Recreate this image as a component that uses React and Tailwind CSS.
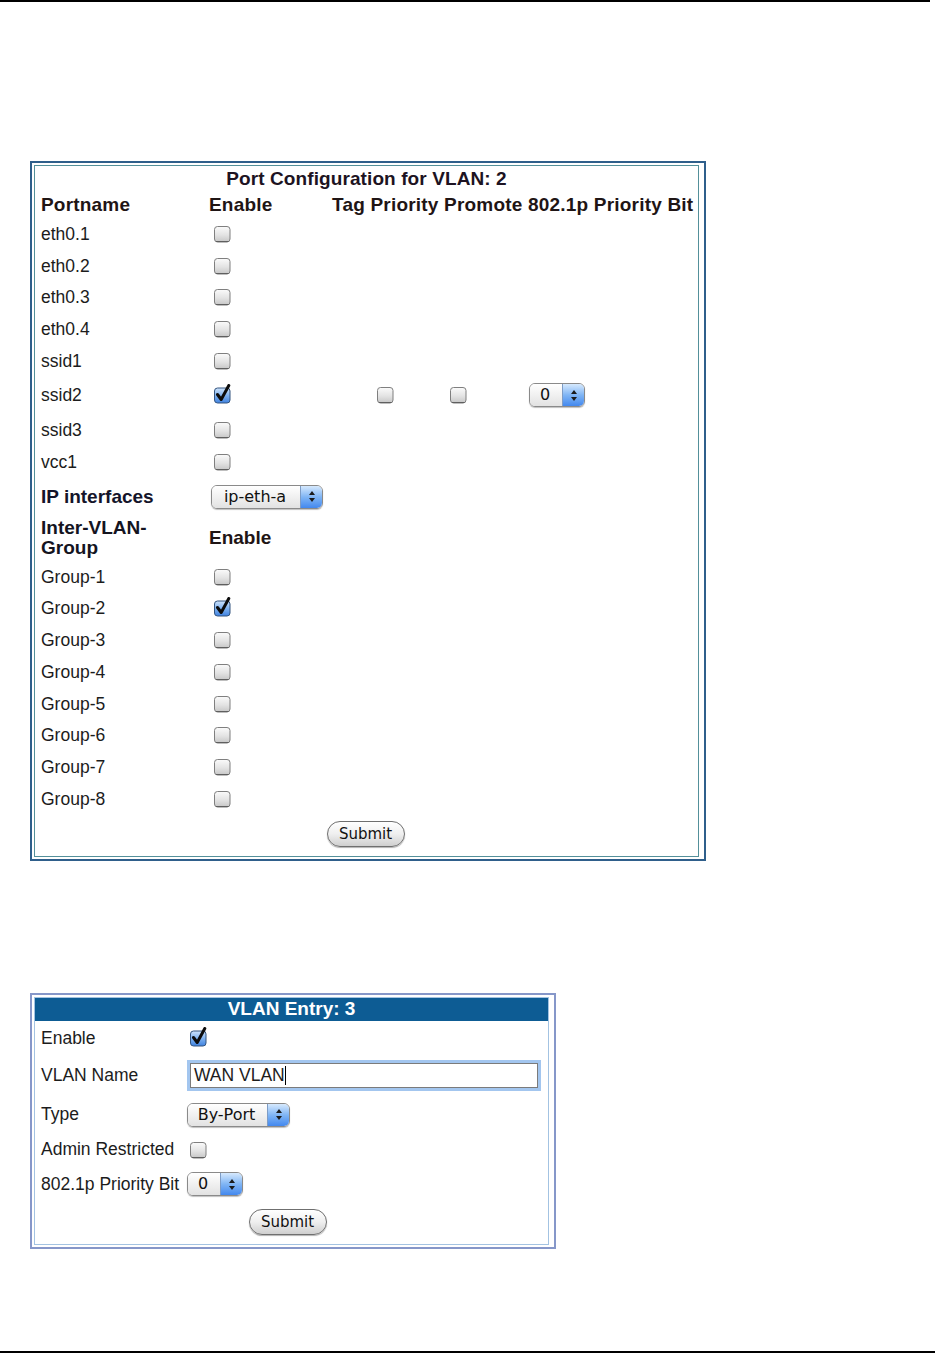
import React from "react";

/* Aqua-style form bits */
function Check({ checked = false }) {
  if (checked) {
    return (
      <svg width="18" height="20" viewBox="0 0 18 20" className="block">
        <defs>
          <linearGradient id="cbOn" x1="0" y1="0" x2="0" y2="1">
            <stop offset="0" stopColor="#cfe4fc" />
            <stop offset="0.5" stopColor="#7fb2f0" />
            <stop offset="1" stopColor="#3f82e0" />
          </linearGradient>
        </defs>
        <rect x="1.5" y="4" width="15.5" height="15" rx="3" fill="url(#cbOn)" stroke="#34557f" />
        <path d="M4.5 10.5 L8.2 15.5 L15.8 1.5" fill="none" stroke="#0c0c0c" strokeWidth="3" strokeLinecap="round" strokeLinejoin="round" />
      </svg>
    );
  }
  return (
    <svg width="18" height="18" viewBox="0 0 18 18" className="block">
      <defs>
        <linearGradient id="cbOff" x1="0" y1="0" x2="0" y2="1">
          <stop offset="0" stopColor="#fbfbfb" />
          <stop offset="0.55" stopColor="#e3e3e3" />
          <stop offset="1" stopColor="#c6c6c6" />
        </linearGradient>
      </defs>
      <rect x="1.5" y="1.5" width="15.5" height="15.5" rx="3" fill="url(#cbOff)" stroke="#7f7f7f" />
      <path d="M3 16.5 H15.5" stroke="#5f5f5f" strokeWidth="1" />
    </svg>
  );
}

function Arrows() {
  return (
    <svg width="8" height="13" viewBox="0 0 8 13">
      <path d="M4 1 L7 5 H1 Z" fill="#1b1b1b" />
      <path d="M4 12 L7 8 H1 Z" fill="#1b1b1b" />
    </svg>
  );
}

function Select({ value, width }) {
  return (
    <div
      className="flex h-[24px] rounded-[6px] border border-[#8a8a8a] overflow-hidden shadow-[0_1px_1px_rgba(0,0,0,0.25)]"
      style={{ width }}
    >
      <div className="flex-1 flex items-center justify-center bg-linear-to-b from-white to-[#e2e2e2] text-[16px] text-[#111] font-['DejaVu_Sans',Verdana,sans-serif] pr-[2px]">
        {value}
      </div>
      <div className="w-[22px] flex items-center justify-center bg-linear-to-b from-[#d6e9fd] via-[#80b5f4] to-[#4388ee] border-l border-[#7d9cc6]">
        <Arrows />
      </div>
    </div>
  );
}

function SubmitButton() {
  return (
    <div className="h-[26px] w-[78px] rounded-full border border-[#6f6f6f] bg-linear-to-b from-white via-[#efefef] to-[#cfcfcf] shadow-[0_1px_1px_rgba(0,0,0,0.3)] flex items-center justify-center text-[15px] text-[#111] font-['DejaVu_Sans',Verdana,sans-serif]">
      Submit
    </div>
  );
}

const PORTS = ["eth0.1", "eth0.2", "eth0.3", "eth0.4", "ssid1"];
const GROUPS = [
  ["Group-1", false],
  ["Group-2", true],
  ["Group-3", false],
  ["Group-4", false],
  ["Group-5", false],
  ["Group-6", false],
  ["Group-7", false],
  ["Group-8", false],
];

function PortRow({ label, checked, h = "h-[31.75px]" }) {
  return (
    <div className={`flex items-center ${h}`}>
      <div className="w-[168px]">{label}</div>
      <div className={`pl-[4px] ${checked ? "pb-[3px]" : ""}`}>
        <Check checked={checked} />
      </div>
    </div>
  );
}

function PortConfig() {
  return (
    <div className="ml-[30px] w-[676px] h-[700px] border-2 border-[#2f5f8b] p-[2px] pr-[5px]">
      <div className="h-full border border-[#54909a] pl-[6px] text-[17.5px] text-[#1c1c1c]">
        <div className="h-[27px] flex items-center justify-center pr-[6px] text-[19px] font-bold text-[#1d1322] tracking-[0.1px]">
          Port Configuration for VLAN: 2
        </div>
        <div className="h-[25px] flex items-center text-[19px] font-bold text-[#1f1515] tracking-[0.2px]">
          <div className="w-[168px]">Portname</div>
          <div className="w-[123px]">Enable</div>
          <div>Tag Priority Promote 802.1p Priority Bit</div>
        </div>
        {PORTS.map((p) => (
          <PortRow key={p} label={p} />
        ))}
        <div className="flex items-center h-[37px]">
          <div className="w-[168px]">ssid2</div>
          <div className="pl-[4px] w-[123px] pb-[3px]">
            <Check checked />
          </div>
          <div className="ml-[44px]">
            <Check />
          </div>
          <div className="ml-[55px]">
            <Check />
          </div>
          <div className="ml-[62px]">
            <Select value="0" width={56} />
          </div>
        </div>
        <PortRow label="ssid3" h="h-[32px]" />
        <PortRow label="vcc1" h="h-[32px]" />
        <div className="flex items-center h-[38px]">
          <div className="w-[168px] text-[19px] font-bold text-[#14142a]">IP interfaces</div>
          <div className="pl-[2px]">
            <Select value="ip-eth-a" width={112} />
          </div>
        </div>
        <div className="flex items-center h-[45px] text-[19px] font-bold text-[#1f1515]">
          <div className="w-[168px] leading-[20px] text-[#14141f]">
            Inter-VLAN-
            <br />
            Group
          </div>
          <div>Enable</div>
        </div>
        {GROUPS.map(([g, c]) => (
          <PortRow key={g} label={g} checked={c} />
        ))}
        <div className="h-[39px] flex items-center justify-center pr-[8px]">
          <SubmitButton />
        </div>
      </div>
    </div>
  );
}

function EntryRow({ label, h, children }) {
  return (
    <div className={`flex items-center ${h}`}>
      <div className="w-[146px]">{label}</div>
      {children}
    </div>
  );
}

function VlanEntry() {
  return (
    <div className="ml-[30px] w-[526px] h-[256px] border-2 border-[#8697c9] p-[2px] pr-[5px]">
      <div className="h-full border border-[#a3c3e2]">
        <div className="h-[23px] bg-[#0d5c94] flex items-center justify-center text-white text-[19px] font-bold">
          VLAN Entry: 3
        </div>
        <div className="pl-[6px] text-[17.5px] text-[#1c1c1c]">
          <EntryRow label="Enable" h="h-[35px]">
            <div className="pl-[2px] pb-[3px]">
              <Check checked />
            </div>
          </EntryRow>
          <EntryRow label="VLAN Name" h="h-[39px]">
            <div className="ml-[3px] w-[348px] h-[25px] border border-[#7b7b7b] shadow-[0_0_0_3px_#a3c6ef] bg-white flex items-center pl-[3px]">
              <span>WAN VLAN</span>
              <span className="inline-block w-[1px] h-[19px] bg-black" />
            </div>
          </EntryRow>
          <EntryRow label="Type" h="h-[39px]">
            <Select value="By-Port" width={103} />
          </EntryRow>
          <EntryRow label="Admin Restricted" h="h-[31px]">
            <div className="pl-[2px]">
              <Check />
            </div>
          </EntryRow>
          <EntryRow label="802.1p Priority Bit" h="h-[38px]">
            <Select value="0" width={56} />
          </EntryRow>
          <div className="h-[38px] flex items-center justify-center pr-[14px]">
            <SubmitButton />
          </div>
        </div>
      </div>
    </div>
  );
}

export default function App() {
  return (
    <div className="w-[941px] h-[1354px] bg-white font-['Liberation_Sans',Arial,sans-serif]">
      <div className="h-[2px] w-[930px] bg-black" />
      <div className="h-[159px]" />
      <PortConfig />
      <div className="h-[132px]" />
      <VlanEntry />
      <div className="h-[102px]" />
      <div className="h-[2px] w-[935px] bg-black" />
    </div>
  );
}
